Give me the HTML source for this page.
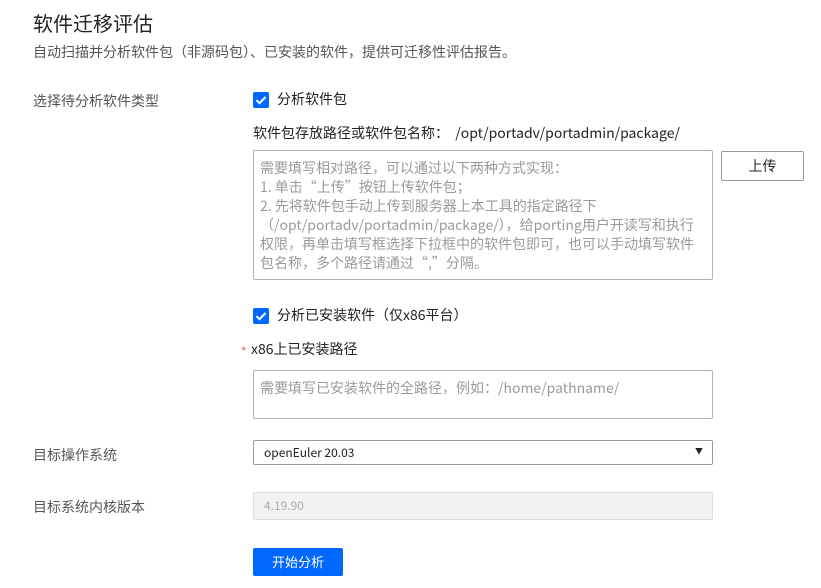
<!DOCTYPE html>
<html><head><meta charset="utf-8"><style>
body{margin:0;width:821px;height:588px;background:#fff;font-family:"Noto Sans CJK SC","Liberation Sans",sans-serif;position:relative;overflow:hidden}
.a{position:absolute;white-space:nowrap;line-height:1.25}
.lbl{font-size:14px;color:#555}
.cb{position:absolute;width:16px;height:16px;background:#0067ff;border-radius:2px}
.cb svg{position:absolute;left:0;top:0}
.box{position:absolute;border:1px solid #b3b3b3;border-radius:2px;box-sizing:border-box}
.ph{font-size:14px;color:#9a9a9a;line-height:19px !important}
</style></head><body>
<div class="a" style="left:33px;top:10px;font-size:20px;color:#222">软件迁移评估</div>
<div class="a" style="left:33px;top:44px;font-size:14px;color:#555">自动扫描并分析软件包（非源码包）、已安装的软件，提供可迁移性评估报告。</div>
<div class="a lbl" style="left:33px;top:93px">选择待分析软件类型</div>
<div class="cb" style="left:253px;top:92px"><svg width="16" height="16"><path d="M3.5 8.2l3 3 6-6.2" stroke="#fff" stroke-width="2" fill="none"/></svg></div>
<div class="a" style="left:277px;top:91px;font-size:14px;color:#222">分析软件包</div>
<div class="a" style="left:253px;top:125px;font-size:14px;color:#222">软件包存放路径或软件包名称： &nbsp;/opt/portadv/portadmin/package/</div>
<div class="box" style="left:253px;top:150px;width:460px;height:130px"></div>
<div class="a ph" style="left:260px;top:159px">需要填写相对路径，可以通过以下两种方式实现：<br>1. 单击“上传”按钮上传软件包；<br>2. 先将软件包手动上传到服务器上本工具的指定路径下<br>（/opt/portadv/portadmin/package/），给porting用户开读写和执行<br>权限，再单击填写框选择下拉框中的软件包即可，也可以手动填写软件<br>包名称，多个路径请通过“,”分隔。</div>
<div class="box" style="left:721px;top:151px;width:83px;height:30px;border-color:#999;text-align:center;line-height:28px;font-size:14px;color:#222">上传</div>
<div class="cb" style="left:253px;top:308px"><svg width="16" height="16"><path d="M3.5 8.2l3 3 6-6.2" stroke="#fff" stroke-width="2" fill="none"/></svg></div>
<div class="a" style="left:277px;top:307px;font-size:14px;color:#222">分析已安装软件（仅x86平台）</div>
<div class="a" style="left:241px;top:344px;font-size:12px;color:#f45c5c">*</div>
<div class="a" style="left:251px;top:341px;font-size:14px;color:#222">x86上已安装路径</div>
<div class="box" style="left:253px;top:370px;width:460px;height:49px"></div>
<div class="a ph" style="left:260px;top:379px">需要填写已安装软件的全路径，例如：/home/pathname/</div>
<div class="a lbl" style="left:33px;top:447px">目标操作系统</div>
<div class="box" style="left:253px;top:440px;width:460px;height:25px;border-color:#999"></div>
<div class="a" style="left:264px;top:445px;font-size:12px;color:#222">openEuler 20.03</div>
<div class="a" style="left:695px;top:447px;font-size:8px;color:#222">▼</div>
<div class="a lbl" style="left:33px;top:499px">目标系统内核版本</div>
<div class="box" style="left:253px;top:492px;width:460px;height:28px;background:#f2f2f2;border-color:#ddd"></div>
<div class="a" style="left:264px;top:498px;font-size:12px;color:#aaa">4.19.90</div>
<div class="a" style="left:253px;top:548px;width:90px;height:28px;background:#0067ff;border-radius:2px;color:#fff;font-size:13px;text-align:center;line-height:27px">开始分析</div>
</body></html>
